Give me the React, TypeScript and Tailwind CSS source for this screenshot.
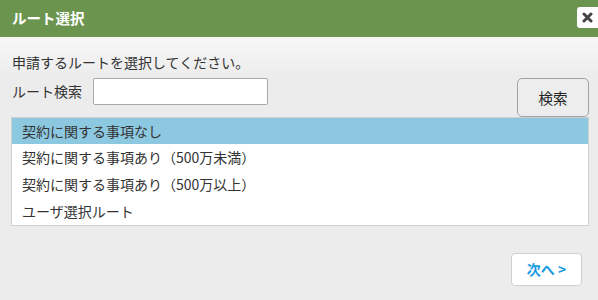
import React from "react";

const font = { fontFamily: '"Noto Sans CJK JP", "Noto Sans", sans-serif' };

export default function App() {
  const items = [
    "契約に関する事項なし",
    "契約に関する事項あり（500万未満）",
    "契約に関する事項あり（500万以上）",
    "ユーザ選択ルート",
  ];
  return (
    <div className="w-[598px] h-[300px] flex flex-col bg-[#ececec] text-[#333]" style={font}>
      <div className="h-[37px] shrink-0 bg-[#6b954e] flex items-center justify-between">
        <span className="pl-[12px] text-white font-bold text-[14.5px] leading-none">ルート選択</span>
        <button className="w-[21px] h-[21px] bg-white rounded-l-[3px] flex items-center justify-center self-start mt-[7px]">
          <svg width="11" height="11" viewBox="0 0 11 11">
            <path d="M2 2 L9 9 M9 2 L2 9" stroke="#444" strokeWidth="3" strokeLinecap="round" />
          </svg>
        </button>
      </div>
      <div className="flex-1 flex flex-col bg-gradient-to-b from-[#f7f7f7] to-[#ececec] to-[40px] pl-[11px] pr-[9px]">
        <div className="mt-[15px] h-[20px] flex items-center text-[14px] pl-[1px]">申請するルートを選択してください。</div>
        <div className="mt-[6px] flex justify-between">
          <div className="flex items-center h-[27px] pl-[1px]">
            <span className="text-[14px]">ルート検索</span>
            <input className="ml-[11px] w-[175px] h-[27px] bg-white border border-[#a9a9a9] rounded-[2px] outline-none" />
          </div>
          <button className="w-[72px] h-[39px] border border-[#a3a3a3] rounded-[5px] bg-[#ededed] text-[14.5px] text-[#222]">
            検索
          </button>
        </div>
        <div className="border border-[#cfcfcf] bg-white">
          {items.map((t, i) => (
            <div
              key={t}
              className={
                i === 0
                  ? "h-[26px] flex items-center pl-[10px] text-[14px] bg-[#8dc8e1]"
                  : "h-[27px] flex items-center pl-[10px] text-[14px]"
              }
            >
              {t}
            </div>
          ))}
        </div>
        <div className="flex justify-end mt-[27px] pr-[7px]">
          <button className="w-[71px] h-[33px] bg-white border border-[#cfcfcf] rounded-[4px] text-[#1a9be0] font-bold text-[14px]">
            次へ &gt;
          </button>
        </div>
      </div>
    </div>
  );
}
